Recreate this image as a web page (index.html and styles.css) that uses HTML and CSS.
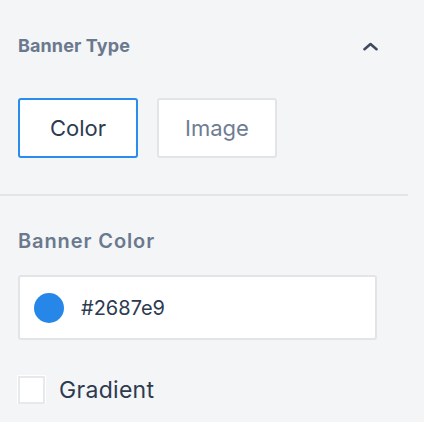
FILE: index.html
```html
<!DOCTYPE html>
<html lang="en">
<head>
<meta charset="utf-8">
<title>Banner settings</title>
<link rel="stylesheet" href="styles.css">
</head>
<body>
<div class="panel">
  <section class="section section-type">
    <header class="section-head">
      <h3 class="head-title">Banner Type</h3>
      <svg class="chevron" width="17" height="9" viewBox="0 0 17 9" aria-hidden="true">
        <path d="M2.5 7.2 L8.5 2 L14.5 7.2" fill="none" stroke="#3f4b5d" stroke-width="2.6" stroke-linecap="round" stroke-linejoin="round"/>
      </svg>
    </header>
    <div class="type-options">
      <button class="opt opt-active" type="button">Color</button>
      <button class="opt" type="button">Image</button>
    </div>
  </section>
  <div class="divider"></div>
  <section class="section section-color">
    <h3 class="field-label">Banner Color</h3>
    <div class="color-field">
      <span class="swatch"></span>
      <span class="hex">#2687e9</span>
    </div>
    <label class="check">
      <span class="box"></span>
      <span class="check-text">Gradient</span>
    </label>
  </section>
</div>
</body>
</html>
```
FILE: styles.css
```css
* { box-sizing: border-box; }
html, body {
  margin: 0;
  padding: 0;
  background: #f4f5f7;
}
body {
  font-family: Inter, "Noto Sans", "Liberation Sans", sans-serif;
  color: #2d3a4f;
}
.panel {
  width: 408px;
}
.section {
  padding: 0 29px 0 18px;
}
.section-type {
  padding-top: 35px;
}
.section-head {
  display: flex;
  align-items: center;
  justify-content: space-between;
}
.head-title {
  margin: 0;
  font-size: 18px;
  line-height: 22px;
  font-weight: 650;
  letter-spacing: 0.1px;
  color: #6a798e;
}
.chevron {
  display: block;
  margin-top: 1px;
}
.type-options {
  display: flex;
  gap: 19px;
  margin-top: 41px;
}
.opt {
  width: 120px;
  height: 60px;
  border: 2px solid #e2e4e8;
  border-radius: 3px;
  background: #ffffff;
  font-family: inherit;
  font-size: 22px;
  color: #6e7d93;
  padding: 0;
  cursor: pointer;
}
.opt-active {
  border-color: #2a8ceb;
  color: #2d3a4f;
}
.divider {
  margin-top: 36px;
  height: 2px;
  background: #e2e4e7;
}
.section-color {
  padding-top: 33px;
}
.field-label {
  margin: 0;
  font-size: 20px;
  line-height: 24px;
  font-weight: 600;
  letter-spacing: 0.9px;
  color: #6a798e;
}
.color-field {
  margin-top: 22px;
  width: 359px;
  height: 65px;
  background: #ffffff;
  border: 2px solid #e2e4e8;
  border-radius: 3px;
  display: flex;
  align-items: center;
  padding-left: 14px;
  gap: 17px;
}
.swatch {
  width: 30px;
  height: 30px;
  border-radius: 50%;
  background: #2687e9;
  flex: none;
}
.hex {
  font-size: 20px;
  color: #2d3a4f;
}
.check {
  margin-top: 36px;
  display: flex;
  align-items: center;
  gap: 14px;
}
.box {
  width: 27px;
  height: 28px;
  background: #ffffff;
  border: 2px solid #e8e9ec;
  box-shadow: 0 0 0 1px #ffffff;
  flex: none;
}
.check-text {
  font-size: 23px;
  letter-spacing: 0.3px;
  color: #2d3a4f;
}
```
